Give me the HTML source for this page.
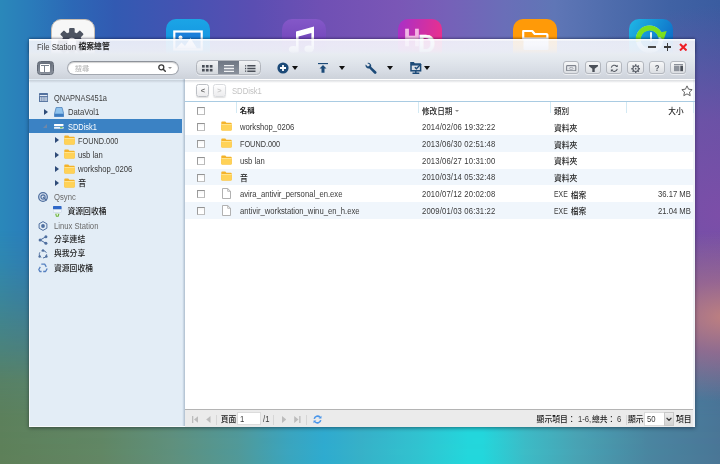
<!DOCTYPE html>
<html lang="zh-Hant">
<head>
<meta charset="utf-8">
<title>File Station 檔案總管</title>
<style>
*{box-sizing:border-box;margin:0;padding:0}
html,body{width:720px;height:464px;overflow:hidden}
body{position:relative;font-family:"Liberation Sans","Noto Sans CJK TC",sans-serif;font-size:7.7px;color:#3a3a3a;
background:linear-gradient(90deg,#2a88ba 0%,#2a7cba 4%,#2c68b6 10%,#325ab2 16%,#4453b2 25%,#5a4eb2 35%,#7050b4 45%,#7a56b6 55%,#7660b8 62%,#6a6eb8 70%,#5f76b6 77%,#4e6cac 85%,#4062a4 93%,#3a5ca0 100%);
}
.abs{position:absolute}
#bgR{position:absolute;left:420px;top:0;width:300px;height:464px;background:radial-gradient(ellipse 230px 210px at 300px 215px,rgba(124,78,168,1) 0%,rgba(124,78,168,.75) 45%,rgba(124,78,168,0) 100%)}
#bgB{position:absolute;left:0;top:230px;width:720px;height:234px;background:linear-gradient(90deg,#5e8058 0%,#628763 14%,#5f917c 24%,#519a98 33%,#3aa6be 40%,#2eaccf 45%,#36b2c8 50%,#30c4d0 58%,#22d8dc 65%,#22d8dc 67%,#3cbcc6 73%,#48a4b4 80%,#4a86a0 90%,#4a7696 100%);-webkit-mask-image:linear-gradient(180deg,rgba(0,0,0,0) 0%,rgba(0,0,0,.1) 14%,rgba(0,0,0,.32) 30%,rgba(0,0,0,.62) 50%,rgba(0,0,0,.86) 64%,rgba(0,0,0,.97) 80%,#000 100%);mask-image:linear-gradient(180deg,rgba(0,0,0,0) 0%,rgba(0,0,0,.1) 14%,rgba(0,0,0,.32) 30%,rgba(0,0,0,.62) 50%,rgba(0,0,0,.86) 64%,rgba(0,0,0,.97) 80%,#000 100%)}
#bgP{position:absolute;left:520px;top:220px;width:200px;height:200px;background:radial-gradient(ellipse 150px 85px at 205px 97px,rgba(190,128,128,1) 0%,rgba(174,108,138,.66) 42%,rgba(150,90,160,0) 100%)}
.dk{position:absolute;top:19px;width:44px;height:44px;border-radius:10px;overflow:hidden}
#win{position:absolute;left:29px;top:40px;width:666px;height:387px;box-shadow:0 1px 4px rgba(0,0,20,.45)}
#title{position:absolute;left:0;top:-.7px;width:666px;height:14.7px;box-shadow:0 -1px 2px rgba(0,0,30,.3);background:linear-gradient(180deg,rgba(255,255,255,.97) 0%,rgba(255,255,255,.97) 7%,rgba(246,247,252,.9) 14%,rgba(246,247,252,.91) 35%,rgba(240,242,248,.95) 80%,rgba(232,236,242,1) 100%)}
#tbar{position:absolute;left:0;top:13.5px;width:666px;height:26.2px;background:linear-gradient(180deg,#e8ecf1 0%,#e2e7ed 25%,#d8dde5 65%,#cdd2da 100%);border-bottom:1px solid #a3a7ae}
#tsh{position:absolute;left:0;top:39.7px;width:666px;height:3px;background:linear-gradient(180deg,rgba(120,128,140,.28),rgba(120,128,140,0));z-index:1}
#left{position:absolute;left:0;top:39px;width:154px;height:348px;background:#e3edf6}
#split{position:absolute;left:153.4px;top:39px;width:2.4px;height:348px;background:linear-gradient(90deg,#dce8f3 0%,#dce8f3 45%,#b7c6d5 55%,#b7c6d5 92%,#fff 100%)}
#main{position:absolute;left:156px;top:39px;width:508px;height:348px;background:#fff}
#lfr{position:absolute;left:0;top:39px;width:1px;height:348px;background:#f4f8fb}
#bfr{position:absolute;left:0;top:386px;width:666px;height:1px;background:#f7f9fb}
#redge{position:absolute;left:664px;top:39px;width:2px;height:348px;background:#f0f4f8}
.cb{width:8px;height:8px;border:1px solid;border-color:#939393 #b8b8b8 #c0c0c0 #9c9c9c;background:linear-gradient(180deg,#f4f4f4,#fff 50%)}
#pc{position:absolute;left:-29px;top:-40px;width:720px;height:464px;will-change:transform}
#pc *{position:absolute}
.t{white-space:nowrap;line-height:10px;height:10px}
.l{font-size:8.4px;transform:scaleX(0.917);transform-origin:0 50%}
.r{transform-origin:100% 50%;text-align:right}
.c{font-size:7.8px;font-weight:500;color:#1c1c1c}
.arr{width:0;height:0;border-left:3.4px solid transparent;border-right:3.4px solid transparent;border-top:4px solid #111}
.exp{width:0;height:0;border-top:3.2px solid transparent;border-bottom:3.2px solid transparent;border-left:4px solid #2e4b78}
.sepv{width:1px;height:10px;background:#d6d6d6;top:414.5px}
</style>
</head>
<body>
<div id="bgR"></div><div id="bgB"></div><div id="bgP"></div>
<div class="dk" style="left:50.6px;background:#f7f7f7;border:1.8px solid #c8beb3"><svg class="abs" style="left:-1.8px;top:-1.8px" width="44" height="44" viewBox="0 0 44 44"><g transform="translate(21.9 24.1)" fill="#4e5461"><circle r="10.2"/><rect x="-2.8" y="-14" width="5.6" height="6" rx="1" transform="rotate(0)"/><rect x="-2.8" y="-14" width="5.6" height="6" rx="1" transform="rotate(45)"/><rect x="-2.8" y="-14" width="5.6" height="6" rx="1" transform="rotate(90)"/><rect x="-2.8" y="-14" width="5.6" height="6" rx="1" transform="rotate(135)"/><rect x="-2.8" y="-14" width="5.6" height="6" rx="1" transform="rotate(180)"/><rect x="-2.8" y="-14" width="5.6" height="6" rx="1" transform="rotate(225)"/><rect x="-2.8" y="-14" width="5.6" height="6" rx="1" transform="rotate(270)"/><rect x="-2.8" y="-14" width="5.6" height="6" rx="1" transform="rotate(315)"/><circle r="4.4" fill="#f6f6f6"/></g></svg></div>
<div class="dk" style="left:166px;background:linear-gradient(180deg,#1ba5e6,#0e86dc)"><svg class="abs" style="left:0;top:.7px" width="44" height="44" viewBox="0 0 44 44"><rect x="8.3" y="11.5" width="27.4" height="18" fill="#1a7fda" stroke="#fff" stroke-width="2.2"/><circle cx="14.5" cy="17.6" r="2" fill="#fff"/><path d="M10 28.5l5.5-6 3.5 3.5 5.5-8 6.5 10.5z" fill="#fff"/></svg></div>
<div class="dk" style="left:282px;background:linear-gradient(180deg,#8458c8,#6438b0)"><svg class="abs" style="left:0;top:0" width="44" height="44" viewBox="0 0 44 44"><path d="M14 12.5l18-5v22.5h-2.6v-16l-12.8 3.6v16h-2.6z" fill="#fff"/><ellipse cx="11.5" cy="30.5" rx="4.6" ry="3.4" fill="#fff"/><ellipse cx="27" cy="30" rx="4.6" ry="3.4" fill="#fff"/></svg></div>
<div class="dk" style="left:397.5px;background:linear-gradient(100deg,#a830c8,#f03088)"><span class="abs" style="left:6.7px;top:6.95px;font-size:24.6px;line-height:24.6px;font-weight:700;color:rgba(255,214,240,.8);transform:scaleX(.9);transform-origin:0 50%;-webkit-text-stroke:.5px rgba(255,214,240,.8)">H</span><span class="abs" style="left:20.7px;top:14px;font-size:23.5px;line-height:23.5px;font-weight:700;color:#fff;-webkit-text-stroke:.4px #fff">D</span></div>
<div class="dk" style="left:513px;background:#ff9a08"><svg class="abs" style="left:0;top:0" width="44" height="44" viewBox="0 0 44 44"><path d="M10.2 12h9l2.5 3h11.5a1.2 1.2 0 0 1 1.2 1.2v3.3h-24.2z" fill="none" stroke="#fff" stroke-width="2.2" stroke-linejoin="round"/><rect x="10.5" y="19" width="25" height="12" rx="1.2" fill="#fff"/></svg></div>
<div class="dk" style="left:628.5px;background:linear-gradient(120deg,#1fb8e6,#0a5cc0)"><svg class="abs" style="left:0;top:0" width="44" height="44" viewBox="0 0 44 44"><circle cx="20.6" cy="20.2" r="11.4" fill="none" stroke="#a8e2ff" stroke-width="4.6"/><path d="M9.45 22.57A11.4 11.4 0 0 1 31.75 17.83" fill="none" stroke="#7be01e" stroke-width="5"/><path d="M27.5 14.3l10.2-2.3-3.3 9.6z" fill="#7be01e"/><path d="M22 13.2v9.3" stroke="#fff" stroke-width="1.8" fill="none"/></svg></div>

<div id="win">
 <div id="title"></div>
 <div id="tbar"></div>
 <div id="left"></div>
 <div id="split"></div>
 <div id="main"></div>
 <div id="redge"></div>
 <div id="tsh"></div>
 <div id="lfr"></div><div id="bfr"></div>
 <div id="pc">
<div style="left:37px;top:60.8px;width:17px;height:14.4px;border-radius:3.5px;background:linear-gradient(180deg,#636b78,#868d99);border:1.2px solid #5f6673;box-shadow:inset 0 0 1.5px rgba(255,255,255,.35)"><div style="left:2.3px;top:2.2px;width:9.8px;height:8.4px;background:#fff;border-radius:.8px"></div><div style="left:3px;top:3.7px;width:8.4px;height:.8px;background:#7a828e"></div><div style="left:5.6px;top:3.7px;width:.9px;height:6.2px;background:#7a828e"></div></div>
<div style="left:66.5px;top:61px;width:112.6px;height:14px;border-radius:7px;background:#fff;border:1px solid #a3a8b0;border-top-color:#8d929a;box-shadow:inset 0 1px 1px rgba(0,0,0,.18)"></div>
<span class="t c" style="top:64.15px;left:74.8px;color:#b2b2b2;font-weight:400;font-size:7.3px;">搜尋</span>
<svg style="left:158px;top:64px" width="8" height="8" viewBox="0 0 8 8"><circle cx="3.3" cy="3.3" r="2.5" fill="none" stroke="#3a3a3a" stroke-width="1.3"/><path d="M5.2 5.2l2.1 2.1" stroke="#3a3a3a" stroke-width="1.5" stroke-linecap="round"/></svg>
<div style="left:168.3px;top:66.9px;border-left:2px solid transparent;border-right:2px solid transparent;border-top:2.4px solid #8c8c8c;width:0;height:0"></div>
<div style="left:196.4px;top:60.4px;width:64.4px;height:15px;border-radius:4.5px;border:1px solid #b2b6bd;background:linear-gradient(180deg,#f2f3f5,#d3d7dc);overflow:hidden;box-shadow:0 1px 0 rgba(255,255,255,.5)"><div style="left:20.3px;top:-1px;width:21.8px;height:15px;background:linear-gradient(180deg,#6c7481,#8b929d)"></div></div>
<svg style="left:202.2px;top:65px" width="10.5" height="6.5" viewBox="0 0 10.5 6.5"><rect x="0" y="0" width="2.7" height="2.6" fill="#4a4f58"/><rect x="3.9" y="0" width="2.7" height="2.6" fill="#4a4f58"/><rect x="7.8" y="0" width="2.7" height="2.6" fill="#4a4f58"/><rect x="0" y="3.9" width="2.7" height="2.6" fill="#4a4f58"/><rect x="3.9" y="3.9" width="2.7" height="2.6" fill="#4a4f58"/><rect x="7.8" y="3.9" width="2.7" height="2.6" fill="#4a4f58"/></svg>
<svg style="left:223.8px;top:65.2px" width="10.6" height="7" viewBox="0 0 10.6 7"><path d="M0 .7h10.6M0 3.5h10.6M0 6.3h10.6" stroke="#eef0f2" stroke-width="1.3"/></svg>
<svg style="left:245.2px;top:65px" width="10.5" height="7" viewBox="0 0 10.5 7"><path d="M2.3 .8h8.2M2.3 3.5h8.2M2.3 6.2h8.2" stroke="#4a4f58" stroke-width="1.4"/><path d="M0 .8h1.2M0 3.5h1.2M0 6.2h1.2" stroke="#4a4f58" stroke-width="1.3"/></svg>
<svg style="left:277px;top:62.2px" width="12" height="12" viewBox="0 0 12 12"><circle cx="6" cy="6" r="5.6" fill="#1c4a78"/><path d="M6 3v6M3 6h6" stroke="#fff" stroke-width="1.8"/></svg>
<div class="arr" style="left:292.2px;top:66px"></div>
<svg style="left:317.8px;top:62.9px" width="10" height="10" viewBox="0 0 10 10"><rect x="0" y="0" width="10" height="1.15" fill="#1c4a78"/><path d="M5 2l3.5 3.6h-2v4.2h-3v-4.2h-2z" fill="#1c4a78"/></svg>
<div class="arr" style="left:339.4px;top:66.2px"></div>
<svg style="left:364.5px;top:62px" width="12" height="12" viewBox="0 0 12 12"><path d="M2.2 1a3 3 0 0 1 3.9 3.7l5 4.8a1.3 1.3 0 0 1-1.9 1.9l-4.8-5a3 3 0 0 1-3.7-3.9l2 2 1.6-.4.4-1.6z" fill="#1c4a78"/></svg>
<div class="arr" style="left:386.8px;top:66.4px"></div>
<svg style="left:409.5px;top:62px" width="12.5" height="12" viewBox="0 0 12.5 12"><path d="M.2 0h3.6l1 1.2h6v1.3h-10.6z" fill="#1c4a78"/><rect x="1" y="2.8" width="9.6" height="6" fill="none" stroke="#1c4a78" stroke-width="1.5"/><path d="M4.8 5.2l1.6 1.6 4.6-4.8" fill="none" stroke="#1c4a78" stroke-width="1.3"/><path d="M5.8 9v1.8M2.5 11.2h6.8" stroke="#1c4a78" stroke-width="1.4"/></svg>
<div class="arr" style="left:424.3px;top:66.4px"></div>
<div style="left:563.2px;top:60.8px;width:16.2px;height:13.7px;border-radius:3px;border:1px solid #b3b7be;background:linear-gradient(180deg,#f6f7f8,#dcdfe3);box-shadow:0 1px 0 rgba(255,255,255,.55)"><svg style="left:2.2px;top:2.8px" width="10.4" height="6.4" viewBox="0 0 10.4 6.4"><rect x=".6" y=".6" width="9.2" height="5.2" rx=".8" fill="none" stroke="#80858e" stroke-width="1.1"/><ellipse cx="5.2" cy="3.4" rx="1.9" ry="1" fill="none" stroke="#9a9fa8" stroke-width=".8"/></svg></div>
<div style="left:584.6px;top:60.8px;width:16.2px;height:13.7px;border-radius:3px;border:1px solid #b3b7be;background:linear-gradient(180deg,#f6f7f8,#dcdfe3);box-shadow:0 1px 0 rgba(255,255,255,.55)"><svg style="left:3px;top:3.2px" width="9" height="7" viewBox="0 0 9 7"><path d="M0 0h9v1.3l-3.3 2.5v3.2h-2.4v-3.2l-3.3-2.5z" fill="#4c5159"/></svg></div>
<div style="left:606.1px;top:60.8px;width:16.2px;height:13.7px;border-radius:3px;border:1px solid #b3b7be;background:linear-gradient(180deg,#f6f7f8,#dcdfe3);box-shadow:0 1px 0 rgba(255,255,255,.55)"><svg style="left:3px;top:2.2px" width="8.6" height="8.6" viewBox="0 0 10 10"><path d="M1.5 4.2a3.6 3.6 0 0 1 6.3-1.5M8.5 5.8a3.6 3.6 0 0 1-6.3 1.5" fill="none" stroke="#555a63" stroke-width="1.25"/><path d="M9 .8v2.8h-2.8zM1 9.2v-2.8h2.8z" fill="#555a63"/></svg></div>
<div style="left:627.4px;top:60.8px;width:16.2px;height:13.7px;border-radius:3px;border:1px solid #b3b7be;background:linear-gradient(180deg,#f6f7f8,#dcdfe3);box-shadow:0 1px 0 rgba(255,255,255,.55)"><svg style="left:2.5px;top:2.2px" width="9.4" height="9.4" viewBox="0 0 10 10"><g transform="translate(5 5)"><circle r="2.9" fill="none" stroke="#5a5f68" stroke-width="1.1"/><path d="M0 -4.7v1.8M0 4.7v-1.8M-4.7 0h1.8M4.7 0h-1.8M-3.3 -3.3l1.25 1.25M3.3 3.3l-1.25 -1.25M-3.3 3.3l1.25 -1.25M3.3 -3.3l-1.25 1.25" stroke="#5a5f68" stroke-width="1.5"/><circle r=".9" fill="#5a5f68"/></g></svg></div>
<div style="left:649.1px;top:60.8px;width:16.2px;height:13.7px;border-radius:3px;border:1px solid #b3b7be;background:linear-gradient(180deg,#f6f7f8,#dcdfe3);box-shadow:0 1px 0 rgba(255,255,255,.55)"><span class="t" style="left:0;top:1.4px;width:14.2px;text-align:center;font-size:8.8px;font-weight:700;color:#5a5f68;transform:scaleX(.88)">?</span></div>
<div style="left:670.1px;top:60.8px;width:16.2px;height:13.7px;border-radius:3px;border:1px solid #b3b7be;background:linear-gradient(180deg,#f6f7f8,#dcdfe3);box-shadow:0 1px 0 rgba(255,255,255,.55)"><svg style="left:2.9px;top:2.6px" width="9.2" height="7.2" viewBox="0 0 9.2 7.2"><rect x="0" y="0" width="9.2" height="1.1" fill="#8a8f98"/><rect x="0" y="1.7" width="5.5" height="5.5" fill="#8d929b"/><rect x="6.3" y="1.7" width="2.9" height="5.5" fill="#4a4f57"/></svg></div>
<div style="left:648px;top:45.8px;width:7.5px;height:1.8px;background:#4a4a4a"></div>
<div style="left:663.5px;top:45.8px;width:7.8px;height:1.8px;background:#3a3a3a"></div><div style="left:666.5px;top:42.8px;width:1.8px;height:7.8px;background:#3a3a3a"></div>
<svg style="left:678.5px;top:42.5px" width="8.5" height="8.5" viewBox="0 0 8.5 8.5"><path d="M1 1l6.5 6.5M7.5 1l-6.5 6.5" stroke="#ee1c24" stroke-width="2"/></svg>
<span class="t l" style="top:41.95px;left:37px;color:#383838;font-size:8.5px;">File Station</span>
<span class="t c" style="top:41.95px;left:78.5px;color:#222;font-weight:700;">檔案總管</span>
<div style="left:184.6px;top:101.2px;width:510px;height:1px;background:#a9cbe2"></div>
<div style="left:196.3px;top:84.3px;width:12.8px;height:13.2px;border-radius:2.5px;border:1px solid #bdc0c5;background:linear-gradient(180deg,#fff,#ececee);box-shadow:0 1px 1px rgba(0,0,0,.12)"><span class="t" style="left:0;top:1px;width:11px;text-align:center;font-size:7.4px;font-weight:700;color:#6c6c6c">&lt;</span></div>
<div style="left:212.8px;top:84.3px;width:12.8px;height:13.2px;border-radius:2.5px;border:1px solid #d9dbde;background:linear-gradient(180deg,#fff,#ececee);box-shadow:0 1px 1px rgba(0,0,0,.12)"><span class="t" style="left:0;top:1px;width:11px;text-align:center;font-size:7.4px;font-weight:700;color:#c9c9c9">&gt;</span></div>
<span class="t l" style="top:86.45px;left:232px;color:#c2c2c2;">SDDisk1</span>
<svg style="left:680.5px;top:85px" width="12" height="11.5" viewBox="0 0 12 11.5"><path d="M6 .9l1.55 3.3 3.6.45-2.65 2.45.7 3.55-3.2-1.75-3.2 1.75.7-3.55-2.65-2.45 3.6-.45z" fill="#fff" stroke="#555" stroke-width=".9" stroke-linejoin="round"/></svg>
<div class="cb" style="left:197px;top:106.5px"></div>
<span class="t c" style="top:106.35px;left:239.8px;font-weight:700;font-size:7.4px;">名稱</span>
<span class="t c" style="top:106.55px;left:422px;font-size:7.6px;">修改日期</span>
<div style="left:455.3px;top:110.2px;width:0;height:0;border-left:2.6px solid transparent;border-right:2.6px solid transparent;border-top:2.9px solid #8a8a8a"></div>
<span class="t c" style="top:106.55px;left:554px;font-size:7.6px;">類別</span>
<span class="t c" style="top:106.95px;right:36.5px;text-align:right;font-size:7.6px;">大小</span>
<div style="left:235.5px;top:102px;width:1px;height:11px;background:#d3e9f3"></div>
<div style="left:417.5px;top:102px;width:1px;height:11px;background:#d3e9f3"></div>
<div style="left:550px;top:102px;width:1px;height:11px;background:#d3e9f3"></div>
<div style="left:625.5px;top:102px;width:1px;height:11px;background:#d3e9f3"></div>
<div style="left:692.5px;top:102px;width:1px;height:11px;background:#d3e9f3"></div>
<div class="cb" style="left:197px;top:123.4px"></div>
<svg style="left:221.3px;top:121.3px" width="11" height="10" viewBox="0 0 11 10"><path d="M.3 1.2a.8.8 0 0 1 .8-.8h3.2l1.1 1.3h4.5a.8.8 0 0 1 .8.8v6.3a.8.8 0 0 1-.8.8h-8.8a.8.8 0 0 1-.8-.8z" fill="#f4b32a"/><rect x=".3" y="3" width="10.4" height="6.6" rx=".8" fill="#ffd257"/><rect x=".3" y="3" width="10.4" height="1" fill="#ffe38e"/></svg>
<span class="t l" style="top:122.25px;left:240px;">workshop_0206</span>
<span class="t l" style="top:122.25px;left:422px;letter-spacing:.17px;">2014/02/06 19:32:22</span>
<span class="t c" style="top:123.85px;left:554px;">資料夾</span>
<div style="left:185px;top:135.2px;width:508px;height:16.7px;background:#f0f6fc"></div>
<div class="cb" style="left:197px;top:140.1px"></div>
<svg style="left:221.3px;top:138px" width="11" height="10" viewBox="0 0 11 10"><path d="M.3 1.2a.8.8 0 0 1 .8-.8h3.2l1.1 1.3h4.5a.8.8 0 0 1 .8.8v6.3a.8.8 0 0 1-.8.8h-8.8a.8.8 0 0 1-.8-.8z" fill="#f4b32a"/><rect x=".3" y="3" width="10.4" height="6.6" rx=".8" fill="#ffd257"/><rect x=".3" y="3" width="10.4" height="1" fill="#ffe38e"/></svg>
<span class="t l" style="top:138.95px;left:240px;transform:scaleX(.87);">FOUND.000</span>
<span class="t l" style="top:138.95px;left:422px;letter-spacing:.17px;">2013/06/30 02:51:48</span>
<span class="t c" style="top:140.55px;left:554px;">資料夾</span>
<div class="cb" style="left:197px;top:156.8px"></div>
<svg style="left:221.3px;top:154.7px" width="11" height="10" viewBox="0 0 11 10"><path d="M.3 1.2a.8.8 0 0 1 .8-.8h3.2l1.1 1.3h4.5a.8.8 0 0 1 .8.8v6.3a.8.8 0 0 1-.8.8h-8.8a.8.8 0 0 1-.8-.8z" fill="#f4b32a"/><rect x=".3" y="3" width="10.4" height="6.6" rx=".8" fill="#ffd257"/><rect x=".3" y="3" width="10.4" height="1" fill="#ffe38e"/></svg>
<span class="t l" style="top:155.65px;left:240px;">usb lan</span>
<span class="t l" style="top:155.65px;left:422px;letter-spacing:.17px;">2013/06/27 10:31:00</span>
<span class="t c" style="top:157.25px;left:554px;">資料夾</span>
<div style="left:185px;top:168.6px;width:508px;height:16.7px;background:#f0f6fc"></div>
<div class="cb" style="left:197px;top:173.5px"></div>
<svg style="left:221.3px;top:171.4px" width="11" height="10" viewBox="0 0 11 10"><path d="M.3 1.2a.8.8 0 0 1 .8-.8h3.2l1.1 1.3h4.5a.8.8 0 0 1 .8.8v6.3a.8.8 0 0 1-.8.8h-8.8a.8.8 0 0 1-.8-.8z" fill="#f4b32a"/><rect x=".3" y="3" width="10.4" height="6.6" rx=".8" fill="#ffd257"/><rect x=".3" y="3" width="10.4" height="1" fill="#ffe38e"/></svg>
<span class="t c" style="top:173.95px;left:240px;">音</span>
<span class="t l" style="top:172.35px;left:422px;letter-spacing:.17px;">2010/03/14 05:32:48</span>
<span class="t c" style="top:173.95px;left:554px;">資料夾</span>
<div class="cb" style="left:197px;top:190.2px"></div>
<svg style="left:222px;top:187.9px" width="9" height="11" viewBox="0 0 9 11"><path d="M.5.5h5.2l2.8 2.8v7.2h-8z" fill="#fff" stroke="#a8a8a8" stroke-width=".9"/><path d="M5.7.5v2.8h2.8" fill="none" stroke="#a8a8a8" stroke-width=".8"/></svg>
<span class="t l" style="top:189.05px;left:240px;">avira_antivir_personal_en.exe</span>
<span class="t l" style="top:189.05px;left:422px;letter-spacing:.17px;">2010/07/12 20:02:08</span>
<span class="t l" style="top:189.05px;left:554px;transform:scaleX(.82);">EXE</span>
<span class="t c" style="top:190.65px;left:570.8px;">檔案</span>
<span class="t l r" style="top:189.05px;right:29.4px;">36.17 MB</span>
<div style="left:185px;top:202px;width:508px;height:16.7px;background:#f0f6fc"></div>
<div class="cb" style="left:197px;top:206.9px"></div>
<svg style="left:222px;top:204.6px" width="9" height="11" viewBox="0 0 9 11"><path d="M.5.5h5.2l2.8 2.8v7.2h-8z" fill="#fff" stroke="#a8a8a8" stroke-width=".9"/><path d="M5.7.5v2.8h2.8" fill="none" stroke="#a8a8a8" stroke-width=".8"/></svg>
<span class="t l" style="top:205.75px;left:240px;">antivir_workstation_winu_en_h.exe</span>
<span class="t l" style="top:205.75px;left:422px;letter-spacing:.17px;">2009/01/03 06:31:22</span>
<span class="t l" style="top:205.75px;left:554px;transform:scaleX(.82);">EXE</span>
<span class="t c" style="top:207.35px;left:570.8px;">檔案</span>
<span class="t l r" style="top:205.75px;right:29.4px;">21.04 MB</span>
<div style="left:29px;top:119.04px;width:153.4px;height:13.6px;background:#3b82c4"></div>
<svg style="left:38.8px;top:93.2px" width="9" height="9.2" viewBox="0 0 9 9.2"><rect x="0" y="0" width="9" height="9.2" rx=".7" fill="#54729f"/><rect x=".7" y="2" width="7.6" height="1.1" fill="#e3eaf4"/><rect x="1.3" y="4.1" width="1.1" height="4" fill="#eef3fa"/><rect x="3.4" y="4.1" width="1.1" height="4" fill="#eef3fa"/><rect x="5.5" y="4.1" width="1.1" height="4" fill="#eef3fa"/><rect x="7.3" y="4.1" width=".9" height="4" fill="#dfe7f2"/></svg>
<span class="t l" style="top:93.15px;left:54px;transform:scaleX(.888);">QNAPNAS451a</span>
<div class="exp" style="left:43.7px;top:109.07px"></div>
<svg style="left:53.6px;top:106.77px" width="10.2" height="10.4" preserveAspectRatio="none" viewBox="0 0 11 10.5"><path d="M2.3.5h6.4l1.8 6.4v2.5a.6.6 0 0 1-.6.6h-8.8a.6.6 0 0 1-.6-.6v-2.5z" fill="#8fc3ee" stroke="#4d80b8" stroke-width=".8"/><rect x=".6" y="6.8" width="9.8" height="3" fill="#3e7cc0"/></svg>
<span class="t l" style="top:107.32px;left:67.5px;">DataVol1</span>
<div style="left:42.9px;top:124.34px;width:0;height:0;border-left:4.2px solid transparent;border-bottom:4.2px solid #6f87a8"></div>
<svg style="left:54.4px;top:123.94px" width="9.5" height="5" preserveAspectRatio="none" viewBox="0 0 11 6"><rect x="0" y="0" width="11" height="2.3" rx=".6" fill="#fff"/><rect x="0" y="3.2" width="11" height="2.6" rx=".6" fill="#eaf2fa"/><rect x="7" y="3.8" width="3" height="1.3" fill="#5ab544"/></svg>
<span class="t l" style="top:121.99px;left:67.5px;color:#fff;transform:scaleX(.885);">SDDisk1</span>
<div class="exp" style="left:54.7px;top:137.41px"></div>
<svg style="left:63.8px;top:135.31px" width="11" height="10" viewBox="0 0 11 10"><path d="M.3 1.2a.8.8 0 0 1 .8-.8h3.2l1.1 1.3h4.5a.8.8 0 0 1 .8.8v6.3a.8.8 0 0 1-.8.8h-8.8a.8.8 0 0 1-.8-.8z" fill="#f4b32a"/><rect x=".3" y="3" width="10.4" height="6.6" rx=".8" fill="#ffd257"/><rect x=".3" y="3" width="10.4" height="1" fill="#ffe38e"/></svg>
<span class="t l" style="top:135.66px;left:78.3px;transform:scaleX(.875);">FOUND.000</span>
<div class="exp" style="left:54.7px;top:151.58px"></div>
<svg style="left:63.8px;top:149.48px" width="11" height="10" viewBox="0 0 11 10"><path d="M.3 1.2a.8.8 0 0 1 .8-.8h3.2l1.1 1.3h4.5a.8.8 0 0 1 .8.8v6.3a.8.8 0 0 1-.8.8h-8.8a.8.8 0 0 1-.8-.8z" fill="#f4b32a"/><rect x=".3" y="3" width="10.4" height="6.6" rx=".8" fill="#ffd257"/><rect x=".3" y="3" width="10.4" height="1" fill="#ffe38e"/></svg>
<span class="t l" style="top:149.83px;left:78.3px;">usb lan</span>
<div class="exp" style="left:54.7px;top:165.75px"></div>
<svg style="left:63.8px;top:163.65px" width="11" height="10" viewBox="0 0 11 10"><path d="M.3 1.2a.8.8 0 0 1 .8-.8h3.2l1.1 1.3h4.5a.8.8 0 0 1 .8.8v6.3a.8.8 0 0 1-.8.8h-8.8a.8.8 0 0 1-.8-.8z" fill="#f4b32a"/><rect x=".3" y="3" width="10.4" height="6.6" rx=".8" fill="#ffd257"/><rect x=".3" y="3" width="10.4" height="1" fill="#ffe38e"/></svg>
<span class="t l" style="top:164px;left:78.3px;">workshop_0206</span>
<div class="exp" style="left:54.7px;top:179.92px"></div>
<svg style="left:63.8px;top:177.82px" width="11" height="10" viewBox="0 0 11 10"><path d="M.3 1.2a.8.8 0 0 1 .8-.8h3.2l1.1 1.3h4.5a.8.8 0 0 1 .8.8v6.3a.8.8 0 0 1-.8.8h-8.8a.8.8 0 0 1-.8-.8z" fill="#f4b32a"/><rect x=".3" y="3" width="10.4" height="6.6" rx=".8" fill="#ffd257"/><rect x=".3" y="3" width="10.4" height="1" fill="#ffe38e"/></svg>
<span class="t c" style="top:178.77px;left:78.3px;">音</span>
<svg style="left:37.9px;top:192.19px" width="10" height="10" viewBox="0 0 10 10"><circle cx="5" cy="5" r="4.3" fill="#dfe8f4" stroke="#4f6f9f" stroke-width="1.3"/><circle cx="5" cy="5" r="2.1" fill="none" stroke="#4f6f9f" stroke-width="1.2"/><path d="M5 5l3.5 3.5" stroke="#4f6f9f" stroke-width="1.1"/></svg>
<span class="t l" style="top:192.34px;left:54px;color:#6a6a6a;">Qsync</span>
<svg style="left:53.4px;top:205.96px" width="8.6" height="10.8" preserveAspectRatio="none" viewBox="0 0 10 10.5"><rect x="0" y="0" width="10" height="3.4" rx=".7" fill="#2f68c8"/><rect x=".3" y="3.4" width="9.4" height="3.2" fill="#eef4fb" stroke="#b8c8dc" stroke-width=".4"/><path d="M2.5 7.5h5l-1 3h-3z" fill="#6bb43c"/><circle cx="5" cy="8.6" r="1" fill="#e9f5d8"/></svg>
<span class="t c" style="top:206.91px;left:67.5px;">資源回收桶</span>
<svg style="left:37.9px;top:220.53px" width="10" height="10" viewBox="0 0 10 10"><path d="M5 .6l3.9 2.2v4.4l-3.9 2.2-3.9-2.2v-4.4z" fill="none" stroke="#4f6f9f" stroke-width="1"/><circle cx="5" cy="5" r="1.9" fill="#4f6f9f"/></svg>
<span class="t l" style="top:220.68px;left:54px;color:#6a6a6a;">Linux Station</span>
<svg style="left:37.9px;top:234.7px" width="10" height="10" viewBox="0 0 10 10"><path d="M7.8 1.8l-5.6 3.2 5.6 3.2" fill="none" stroke="#4f6f9f" stroke-width="1"/><circle cx="7.9" cy="1.8" r="1.5" fill="#4f6f9f"/><circle cx="2.1" cy="5" r="1.5" fill="#4f6f9f"/><circle cx="7.9" cy="8.2" r="1.5" fill="#4f6f9f"/></svg>
<span class="t c" style="top:235.25px;left:54px;">分享連結</span>
<svg style="left:37.9px;top:248.87px" width="10" height="10" viewBox="0 0 10 10"><circle cx="5" cy="5.3" r="3.7" fill="none" stroke="#4f6f9f" stroke-width="1" stroke-dasharray="5.7 2"/><circle cx="5" cy="1.5" r="1.2" fill="#4f6f9f"/><circle cx="1.6" cy="7.5" r="1.2" fill="#4f6f9f"/><circle cx="8.4" cy="7.5" r="1.2" fill="#4f6f9f"/></svg>
<span class="t c" style="top:249.42px;left:54px;">與我分享</span>
<svg style="left:37.9px;top:263.04px" width="10" height="10" viewBox="0 0 10 10"><path d="M3.3 1.2h3.4l1.6 2.6M9.2 5.5l-1.6 3h-2.4M3.6 8.5h-1.8l-1-2 1.5-2.6" fill="none" stroke="#5580c0" stroke-width="1.3" stroke-linejoin="round"/></svg>
<span class="t c" style="top:263.59px;left:54px;">資源回收桶</span>
<div style="left:185px;top:409px;width:508px;height:18px;background:#ebebeb;border-top:1px solid #b4b4b4"></div>
<svg style="left:191.5px;top:415.5px" width="6.5" height="7" viewBox="0 0 6.5 7"><rect x="0" y="0" width="1.3" height="7" fill="#bcbcbc"/><path d="M6.3 0v7l-4.3-3.5z" fill="#bcbcbc"/></svg>
<svg style="left:206.3px;top:415.5px" width="4.5" height="7" viewBox="0 0 4.5 7"><path d="M4.5 0v7l-4.3-3.5z" fill="#bcbcbc"/></svg>
<div class="sepv" style="left:215.5px"></div>
<span class="t c" style="top:414.65px;left:220.8px;">頁面</span>
<div style="left:236.5px;top:412px;width:24.5px;height:13px;background:#fff;border:1px solid #dcdcdc"></div>
<span class="t l" style="top:414.05px;left:239.5px;">1</span>
<span class="t l" style="top:414.05px;left:263.3px;">/1</span>
<div class="sepv" style="left:273px"></div>
<svg style="left:281.5px;top:415.5px" width="4.5" height="7" viewBox="0 0 4.5 7"><path d="M0 0v7l4.3-3.5z" fill="#bcbcbc"/></svg>
<svg style="left:294.3px;top:415.5px" width="6.5" height="7" viewBox="0 0 6.5 7"><rect x="5.2" y="0" width="1.3" height="7" fill="#bcbcbc"/><path d="M.2 0v7l4.3-3.5z" fill="#bcbcbc"/></svg>
<div class="sepv" style="left:306.3px"></div>
<svg style="left:313px;top:414.5px" width="9" height="9" viewBox="0 0 10 10"><path d="M1.4 4.3a3.7 3.7 0 0 1 6.4-1.8M8.6 5.7a3.7 3.7 0 0 1-6.4 1.8" fill="none" stroke="#4a96ea" stroke-width="1.7"/><path d="M9.4.8v3.2h-3.2zM.6 9.2v-3.2h3.2z" fill="#4a96ea"/></svg>
<span class="t c" style="top:414.65px;left:536.6px;">顯示項目：</span>
<span class="t l" style="top:414.05px;left:578px;">1-6,</span>
<span class="t c" style="top:414.65px;left:592px;">總共：</span>
<span class="t l" style="top:414.05px;left:617.4px;">6</span>
<div class="sepv" style="left:625.5px"></div>
<span class="t c" style="top:414.65px;left:628px;">顯示</span>
<div style="left:644px;top:412px;width:30px;height:13.5px;background:#fff;border:1px solid #dadada"><div style="left:18.5px;top:-1px;width:10.5px;height:13.5px;background:linear-gradient(180deg,#ececec,#d2d2d2);border:1px solid #c8c8c8"></div><svg style="left:21px;top:3.5px" width="6" height="4.5" viewBox="0 0 6 4.5"><path d="M.6.8l2.4 2.6 2.4-2.6" fill="none" stroke="#333" stroke-width="1.2"/></svg></div>
<span class="t l" style="top:414.05px;left:647px;">50</span>
<span class="t c" style="top:414.65px;left:676px;">項目</span>
 </div>
</div>
</body>
</html>
